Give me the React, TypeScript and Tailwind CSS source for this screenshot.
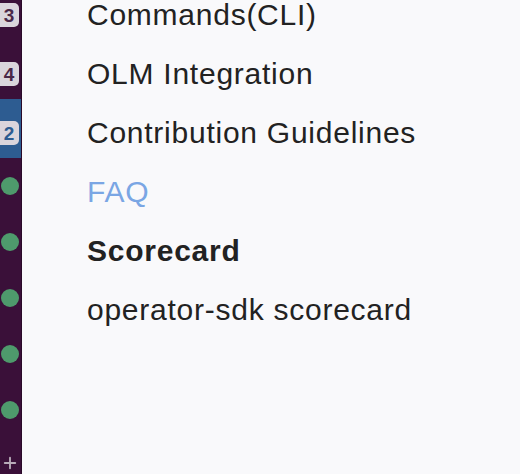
import { Plus } from 'lucide-react'

const badges = [
    { n: '3', active: false },
    { n: '4', active: false },
    { n: '2', active: true },
]

const links = [
    { label: 'Commands(CLI)', kind: 'link' },
    { label: 'OLM Integration', kind: 'link' },
    { label: 'Contribution Guidelines', kind: 'link' },
    { label: 'FAQ', kind: 'active' },
    { label: 'Scorecard', kind: 'heading' },
    { label: 'operator-sdk scorecard', kind: 'link' },
]

export default function App() {
    return (
        <div
            className="flex h-[474px] w-[520px] overflow-hidden bg-[#f9f9fb]"
            style={{ fontFamily: '"Liberation Sans", Arial, sans-serif' }}
        >
            {/* workspace rail */}
            <div className="w-[22px] shrink-0 bg-[#3a1039] border-r border-[#2a0a28] flex flex-col">
                <div className="mt-[-19px] shrink-0 flex flex-col">
                    {badges.map((b) => (
                        <div
                            key={b.n}
                            className={`h-[59px] pt-[9px] flex items-center ${b.active ? 'bg-[#2d5c91]' : ''}`}
                        >
                            <span
                                className={`ml-[-4px] h-[24px] w-[23px] rounded-[5px] bg-[#dad5dc] flex items-center justify-center text-[19px] font-bold leading-none ${b.active ? 'text-[#2d5c91]' : 'text-[#4a2848]'}`}
                            >
                                <span className="ml-[3px]">{b.n}</span>
                            </span>
                        </div>
                    ))}
                </div>
                <div className="shrink-0 flex flex-col">
                    {[0, 1, 2, 3, 4].map((i) => (
                        <div key={i} className="h-[56px] flex items-center">
                            <span className="ml-[1px] h-[18px] w-[18px] rounded-full bg-[#4e9a6c]" />
                        </div>
                    ))}
                </div>
                <div className="shrink-0 flex items-center h-[50px]">
                    <Plus className="ml-[1px] h-[18px] w-[18px] text-[#b8abb9]" strokeWidth={2.5} />
                </div>
            </div>

            {/* doc nav */}
            <div className="flex-1 pl-[65px] mt-[-15px]">
                {links.map((l) => (
                    <div
                        key={l.label}
                        className={`h-[59px] leading-[59px] text-[30px] tracking-[0.75px] whitespace-nowrap ${l.kind === 'active'
                            ? 'text-[#7aa6e4]'
                            : l.kind === 'heading'
                                ? 'font-bold text-[#222222]'
                                : 'text-[#222222]'
                            }`}
                    >
                        {l.label}
                    </div>
                ))}
            </div>
        </div>
    )
}
